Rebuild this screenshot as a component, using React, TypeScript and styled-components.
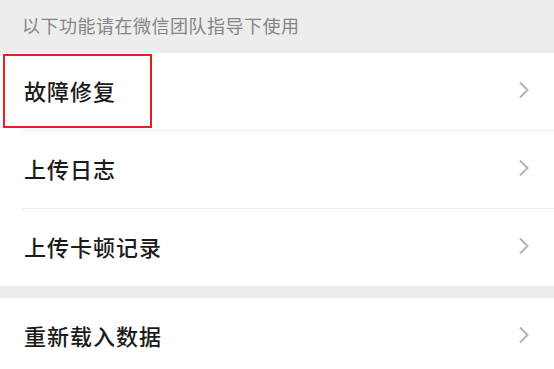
import React from 'react';
import styled, { createGlobalStyle } from 'styled-components';

const GlobalStyle = createGlobalStyle`
  html, body {
    margin: 0;
    padding: 0;
    background: #ededed;
    font-family: "Noto Sans CJK SC", "Noto Sans", sans-serif;
  }
`;

const Page = styled.div`
  width: 554px;
  height: 369px;
  overflow: hidden;
  background: #ededed;
`;

const Tip = styled.div`
  height: 53px;
  display: flex;
  align-items: center;
  padding: 0 0 3px 22px;
  box-sizing: border-box;
  font-size: 18px;
  line-height: 1;
  color: #858585;
  letter-spacing: 0.5px;
`;

const Group = styled.div<{ $gap?: boolean }>`
  background: #ffffff;
  margin-top: ${(p) => (p.$gap ? '12px' : '0')};
`;

const Row = styled.div<{ $last?: boolean }>`
  position: relative;
  height: 77px;
  box-sizing: border-box;
  display: flex;
  align-items: center;
  justify-content: space-between;
  padding: 0 24px 3px 24px;
  &::after {
    content: '';
    display: ${(p) => (p.$last ? 'none' : 'block')};
    position: absolute;
    left: 22px;
    right: 0;
    bottom: -1px;
    height: 1px;
    background: #ececec;
  }
  & + & {
    margin-top: 1px;
  }
`;

const Label = styled.span`
  font-size: 22px;
  line-height: 1;
  font-weight: 500;
  color: #1b1b1b;
  letter-spacing: 1px;
`;

const Highlight = styled.div`
  position: absolute;
  left: 3px;
  top: 1px;
  width: 145px;
  height: 70px;
  border: 2px solid #ea1c24;
  pointer-events: none;
`;

const Chevron = () => (
  <svg width="12" height="20" viewBox="0 0 12 20">
    <path d="M2 2.5 L9.5 10 L2 17.5" fill="none" stroke="#b3b3b3" strokeWidth="2" />
  </svg>
);

export default function App() {
  return (
    <Page>
      <GlobalStyle />
      <Tip>以下功能请在微信团队指导下使用</Tip>
      <Group>
        <Row>
          <Highlight />
          <Label>故障修复</Label>
          <Chevron />
        </Row>
        <Row>
          <Label>上传日志</Label>
          <Chevron />
        </Row>
        <Row $last>
          <Label>上传卡顿记录</Label>
          <Chevron />
        </Row>
      </Group>
      <Group $gap>
        <Row $last>
          <Label>重新载入数据</Label>
          <Chevron />
        </Row>
      </Group>
    </Page>
  );
}
